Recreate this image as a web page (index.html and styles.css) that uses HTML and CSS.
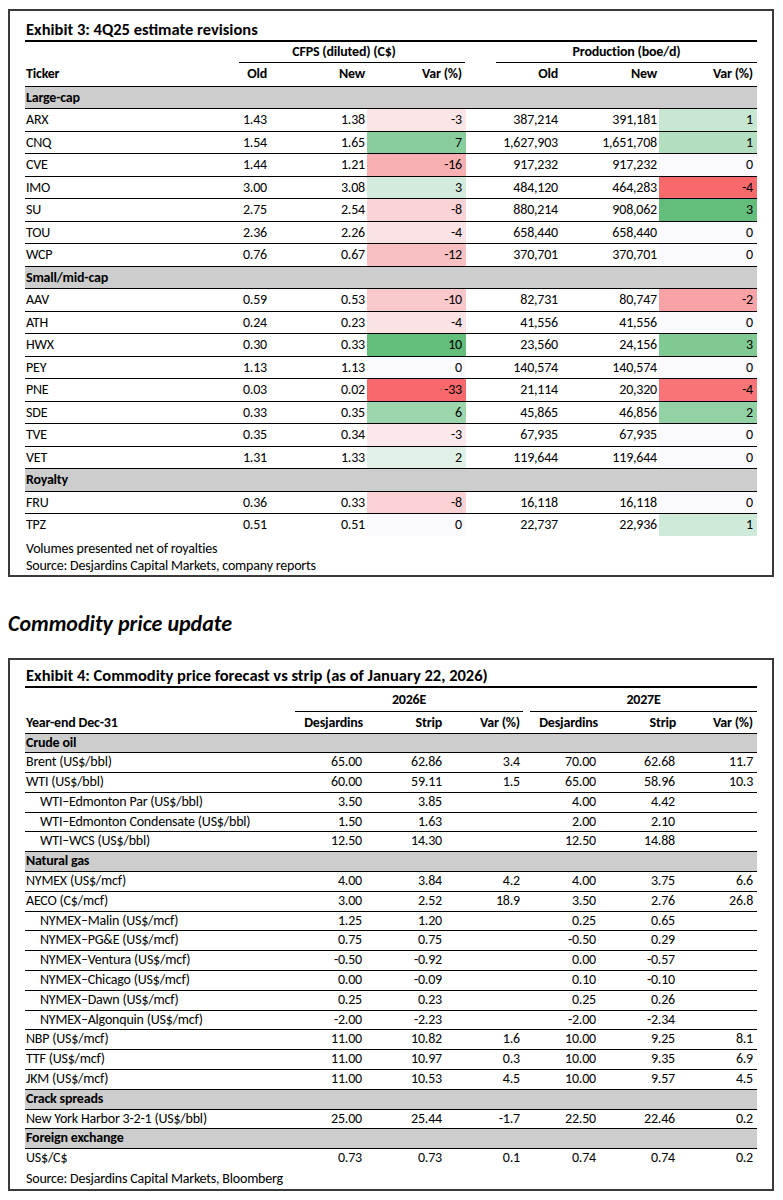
FILE: index.html
```html
<!DOCTYPE html>
<html>
<head>
<meta charset="utf-8">
<link rel="stylesheet" href="styles.css">
</head>
<body>
<section class="exhibit ex3">
  <div class="title">Exhibit 3: 4Q25 estimate revisions</div>
  <table class="t3">
    <colgroup>
      <col class="c-tk"><col class="c-o"><col class="c-n"><col class="c-v"><col class="c-po"><col class="c-pn"><col class="c-pv">
    </colgroup>
    <thead>
      <tr class="grp-row">
        <th></th>
        <th colspan="3"><div class="grp g-cfps">CFPS (diluted) (C$)</div></th>
        <th colspan="3"><div class="grp g-prod">Production (boe/d)</div></th>
      </tr>
      <tr class="hdr-row">
        <th class="lbl">Ticker</th>
        <th class="r2">Old</th>
        <th class="r1">New</th>
        <th class="r4">Var (%)</th>
        <th class="r8">Old</th>
        <th class="r1">New</th>
        <th class="r4">Var (%)</th>
      </tr>
    </thead>
    <tbody>
      <tr class="sec"><td colspan="7">Large-cap</td></tr>
      <tr><td class="lbl">ARX</td><td class="r2">1.43</td><td class="r1">1.38</td><td class="r4" style="background:#fbe5e7">-3</td><td class="r8">387,214</td><td class="r1">391,181</td><td class="r4" style="background:#c8e7d2">1</td></tr>
      <tr><td class="lbl">CNQ</td><td class="r2">1.54</td><td class="r1">1.65</td><td class="r4" style="background:#88cd9b">7</td><td class="r8">1,627,903</td><td class="r1">1,651,708</td><td class="r4" style="background:#b3dec0">1</td></tr>
      <tr><td class="lbl">CVE</td><td class="r2">1.44</td><td class="r1">1.21</td><td class="r4" style="background:#f8b0b3">-16</td><td class="r8">917,232</td><td class="r1">917,232</td><td class="r4" style="background:#fafafe">0</td></tr>
      <tr><td class="lbl">IMO</td><td class="r2">3.00</td><td class="r1">3.08</td><td class="r4" style="background:#d3ebdc">3</td><td class="r8">484,120</td><td class="r1">464,283</td><td class="r4" style="background:#f8696b">-4</td></tr>
      <tr><td class="lbl">SU</td><td class="r2">2.75</td><td class="r1">2.54</td><td class="r4" style="background:#fad3d6">-8</td><td class="r8">880,214</td><td class="r1">908,062</td><td class="r4" style="background:#63be7b">3</td></tr>
      <tr><td class="lbl">TOU</td><td class="r2">2.36</td><td class="r1">2.26</td><td class="r4" style="background:#fbe3e5">-4</td><td class="r8">658,440</td><td class="r1">658,440</td><td class="r4" style="background:#fafafe">0</td></tr>
      <tr><td class="lbl">WCP</td><td class="r2">0.76</td><td class="r1">0.67</td><td class="r4" style="background:#f9c0c3">-12</td><td class="r8">370,701</td><td class="r1">370,701</td><td class="r4" style="background:#fafafe">0</td></tr>
      <tr class="sec"><td colspan="7">Small/mid-cap</td></tr>
      <tr><td class="lbl">AAV</td><td class="r2">0.59</td><td class="r1">0.53</td><td class="r4" style="background:#f9c8cb">-10</td><td class="r8">82,731</td><td class="r1">80,747</td><td class="r4" style="background:#f9a3a6">-2</td></tr>
      <tr><td class="lbl">ATH</td><td class="r2">0.24</td><td class="r1">0.23</td><td class="r4" style="background:#fbe3e5">-4</td><td class="r8">41,556</td><td class="r1">41,556</td><td class="r4" style="background:#fafafe">0</td></tr>
      <tr><td class="lbl">HWX</td><td class="r2">0.30</td><td class="r1">0.33</td><td class="r4" style="background:#63be7b">10</td><td class="r8">23,560</td><td class="r1">24,156</td><td class="r4" style="background:#80c993">3</td></tr>
      <tr><td class="lbl">PEY</td><td class="r2">1.13</td><td class="r1">1.13</td><td class="r4" style="background:#fafafe">0</td><td class="r8">140,574</td><td class="r1">140,574</td><td class="r4" style="background:#fafafe">0</td></tr>
      <tr><td class="lbl">PNE</td><td class="r2">0.03</td><td class="r1">0.02</td><td class="r4" style="background:#f8696b">-33</td><td class="r8">21,114</td><td class="r1">20,320</td><td class="r4" style="background:#f87476">-4</td></tr>
      <tr><td class="lbl">SDE</td><td class="r2">0.33</td><td class="r1">0.35</td><td class="r4" style="background:#9dd5ad">6</td><td class="r8">45,865</td><td class="r1">46,856</td><td class="r4" style="background:#91d1a3">2</td></tr>
      <tr><td class="lbl">TVE</td><td class="r2">0.35</td><td class="r1">0.34</td><td class="r4" style="background:#fbe8ea">-3</td><td class="r8">67,935</td><td class="r1">67,935</td><td class="r4" style="background:#fafafe">0</td></tr>
      <tr><td class="lbl">VET</td><td class="r2">1.31</td><td class="r1">1.33</td><td class="r4" style="background:#e1f1e7">2</td><td class="r8">119,644</td><td class="r1">119,644</td><td class="r4" style="background:#fafafe">0</td></tr>
      <tr class="sec"><td colspan="7">Royalty</td></tr>
      <tr><td class="lbl">FRU</td><td class="r2">0.36</td><td class="r1">0.33</td><td class="r4" style="background:#fad1d4">-8</td><td class="r8">16,118</td><td class="r1">16,118</td><td class="r4" style="background:#fafafe">0</td></tr>
      <tr class="last"><td class="lbl">TPZ</td><td class="r2">0.51</td><td class="r1">0.51</td><td class="r4" style="background:#fafafe">0</td><td class="r8">22,737</td><td class="r1">22,936</td><td class="r4" style="background:#d0eada">1</td></tr>
    </tbody>
  </table>
  <div class="notes">
    <div>Volumes presented net of royalties</div>
    <div>Source: Desjardins Capital Markets, company reports</div>
  </div>
</section>

<h2 class="section-title">Commodity price update</h2>

<section class="exhibit ex4">
  <div class="title">Exhibit 4: Commodity price forecast vs strip (as of January 22, 2026)</div>
  <table class="t4">
    <colgroup>
      <col class="c-lb"><col class="c-d1"><col class="c-s1"><col class="c-v1"><col class="c-d2"><col class="c-s2"><col class="c-v2">
    </colgroup>
    <thead>
      <tr class="grp-row">
        <th></th>
        <th colspan="3"><div class="grp g-26">2026E</div></th>
        <th colspan="3"><div class="grp g-27">2027E</div></th>
      </tr>
      <tr class="hdr-row">
        <th class="lbl">Year-end Dec-31</th>
        <th class="p4">Desjardins</th>
        <th class="p3">Strip</th>
        <th class="p5">Var (%)</th>
        <th class="p5">Desjardins</th>
        <th class="p4">Strip</th>
        <th class="p4">Var (%)</th>
      </tr>
    </thead>
    <tbody>
      <tr class="sec"><td colspan="7">Crude oil</td></tr>
      <tr><td class="lbl">Brent (US$/bbl)</td><td class="p5">65.00</td><td class="p3">62.86</td><td class="p5">3.4</td><td class="p7">70.00</td><td class="p5">62.68</td><td class="p4">11.7</td></tr>
      <tr><td class="lbl">WTI (US$/bbl)</td><td class="p5">60.00</td><td class="p3">59.11</td><td class="p5">1.5</td><td class="p7">65.00</td><td class="p5">58.96</td><td class="p4">10.3</td></tr>
      <tr><td class="lbl ind">WTI–Edmonton Par (US$/bbl)</td><td class="p5">3.50</td><td class="p3">3.85</td><td class="p5"></td><td class="p7">4.00</td><td class="p5">4.42</td><td class="p4"></td></tr>
      <tr><td class="lbl ind">WTI–Edmonton Condensate (US$/bbl)</td><td class="p5">1.50</td><td class="p3">1.63</td><td class="p5"></td><td class="p7">2.00</td><td class="p5">2.10</td><td class="p4"></td></tr>
      <tr><td class="lbl ind">WTI–WCS (US$/bbl)</td><td class="p5">12.50</td><td class="p3">14.30</td><td class="p5"></td><td class="p7">12.50</td><td class="p5">14.88</td><td class="p4"></td></tr>
      <tr class="sec"><td colspan="7">Natural gas</td></tr>
      <tr><td class="lbl">NYMEX (US$/mcf)</td><td class="p5">4.00</td><td class="p3">3.84</td><td class="p5">4.2</td><td class="p7">4.00</td><td class="p5">3.75</td><td class="p4">6.6</td></tr>
      <tr><td class="lbl">AECO (C$/mcf)</td><td class="p5">3.00</td><td class="p3">2.52</td><td class="p5">18.9</td><td class="p7">3.50</td><td class="p5">2.76</td><td class="p4">26.8</td></tr>
      <tr><td class="lbl ind">NYMEX–Malin (US$/mcf)</td><td class="p5">1.25</td><td class="p3">1.20</td><td class="p5"></td><td class="p7">0.25</td><td class="p5">0.65</td><td class="p4"></td></tr>
      <tr><td class="lbl ind">NYMEX–PG&amp;E (US$/mcf)</td><td class="p5">0.75</td><td class="p3">0.75</td><td class="p5"></td><td class="p7">-0.50</td><td class="p5">0.29</td><td class="p4"></td></tr>
      <tr><td class="lbl ind">NYMEX–Ventura (US$/mcf)</td><td class="p5">-0.50</td><td class="p3">-0.92</td><td class="p5"></td><td class="p7">0.00</td><td class="p5">-0.57</td><td class="p4"></td></tr>
      <tr><td class="lbl ind">NYMEX–Chicago (US$/mcf)</td><td class="p5">0.00</td><td class="p3">-0.09</td><td class="p5"></td><td class="p7">0.10</td><td class="p5">-0.10</td><td class="p4"></td></tr>
      <tr><td class="lbl ind">NYMEX–Dawn (US$/mcf)</td><td class="p5">0.25</td><td class="p3">0.23</td><td class="p5"></td><td class="p7">0.25</td><td class="p5">0.26</td><td class="p4"></td></tr>
      <tr><td class="lbl ind">NYMEX–Algonquin (US$/mcf)</td><td class="p5">-2.00</td><td class="p3">-2.23</td><td class="p5"></td><td class="p7">-2.00</td><td class="p5">-2.34</td><td class="p4"></td></tr>
      <tr><td class="lbl">NBP (US$/mcf)</td><td class="p5">11.00</td><td class="p3">10.82</td><td class="p5">1.6</td><td class="p7">10.00</td><td class="p5">9.25</td><td class="p4">8.1</td></tr>
      <tr><td class="lbl">TTF (US$/mcf)</td><td class="p5">11.00</td><td class="p3">10.97</td><td class="p5">0.3</td><td class="p7">10.00</td><td class="p5">9.35</td><td class="p4">6.9</td></tr>
      <tr><td class="lbl">JKM (US$/mcf)</td><td class="p5">11.00</td><td class="p3">10.53</td><td class="p5">4.5</td><td class="p7">10.00</td><td class="p5">9.57</td><td class="p4">4.5</td></tr>
      <tr class="sec"><td colspan="7">Crack spreads</td></tr>
      <tr><td class="lbl">New York Harbor 3-2-1 (US$/bbl)</td><td class="p5">25.00</td><td class="p3">25.44</td><td class="p5">-1.7</td><td class="p7">22.50</td><td class="p5">22.46</td><td class="p4">0.2</td></tr>
      <tr class="sec"><td colspan="7">Foreign exchange</td></tr>
      <tr class="last"><td class="lbl">US$/C$</td><td class="p5">0.73</td><td class="p3">0.73</td><td class="p5">0.1</td><td class="p7">0.74</td><td class="p5">0.74</td><td class="p4">0.2</td></tr>
    </tbody>
  </table>
  <div class="notes notes4">
    <div>Source: Desjardins Capital Markets, Bloomberg</div>
  </div>
</section>
</body>
</html>
```

FILE: styles.css
```css
html, body {
  margin: 0;
  background: #ffffff;
}

body {
  padding: 9px 9px 0 8px;
  font-family: "Carlito", "Lato", "Open Sans", sans-serif;
  font-size: 14px;
  letter-spacing: -0.2px;
  color: #000;
}

.exhibit {
  width: 766px;
  box-sizing: border-box;
  border: 2px solid #3a3a3a;
  padding: 8px 15px 0 15px;
}

.ex4 {
  padding-top: 5px;
}

.title {
  font-weight: 700;
  font-size: 16.5px;
  letter-spacing: 0;
  line-height: 21px;
  padding-left: 1px;
  border-bottom: 2px solid #000;
}

table {
  width: 732px;
  table-layout: fixed;
  border-collapse: collapse;
}

th, td {
  padding: 0 4px 0 1px;
  white-space: nowrap;
  overflow: hidden;
  text-align: right;
  font-weight: 400;
}

th {
  font-weight: 700;
}

.lbl {
  text-align: left;
}

.ind {
  padding-left: 15px;
}

/* Exhibit 3 columns */
.c-tk { width: 148px; }
.c-o  { width: 97px; }
.c-n  { width: 97px; }
.c-v  { width: 99px; }
.c-po { width: 100px; }
.c-pn { width: 93px; }
.c-pv { width: 98px; }

.r1 { padding-right: 2px; }
.r2 { padding-right: 3px; }
.r4 { padding-right: 4px; }
.r8 { padding-right: 8px; }

/* Exhibit 4 columns */
.c-lb { width: 263px; }
.c-d1 { width: 79px; }
.c-s1 { width: 78px; }
.c-v1 { width: 80px; }
.c-d2 { width: 78px; }
.c-s2 { width: 77px; }
.c-v2 { width: 77px; }

.p3 { padding-right: 3px; }
.p4 { padding-right: 4px; }
.p5 { padding-right: 5px; }
.p7 { padding-right: 7px; }

.grp-row th {
  padding: 0;
  vertical-align: bottom;
}

.grp {
  text-align: center;
  font-weight: 700;
  border-bottom: 1px solid #000;
}

.g-cfps { margin: 0 1px 0 66px; padding-right: 16px; }
.g-prod { margin: 0 0 0 30px; }
.g-26 { margin: 0 2px 0 7px; }
.g-27 { margin: 0 0 0 5px; }

.t3 .grp { line-height: 20px; }
.t4 .grp { line-height: 23px; }

.hdr-row th {
  border-bottom: 1px solid #000;
}

.t3 .hdr-row th { line-height: 22.5px; }
.t4 .hdr-row th { line-height: 21px; }

tbody td {
  border-bottom: 1px solid #000;
}

tbody tr.last td {
  border-bottom: none;
}

.t3 tbody td { line-height: 21.5px; }
.t4 tbody td { line-height: 18.8px; }

.sec td {
  background: #cdcdcd;
  font-weight: 700;
  text-align: left;
}

.notes {
  line-height: 17px;
  padding: 4px 0 1px 1px;
}

.notes4 {
  padding: 2px 0 2px 1px;
}

.section-title {
  font-size: 22px;
  font-weight: 700;
  font-style: italic;
  letter-spacing: 0;
  line-height: 29px;
  margin: 32px 0 20px 0;
}
```
